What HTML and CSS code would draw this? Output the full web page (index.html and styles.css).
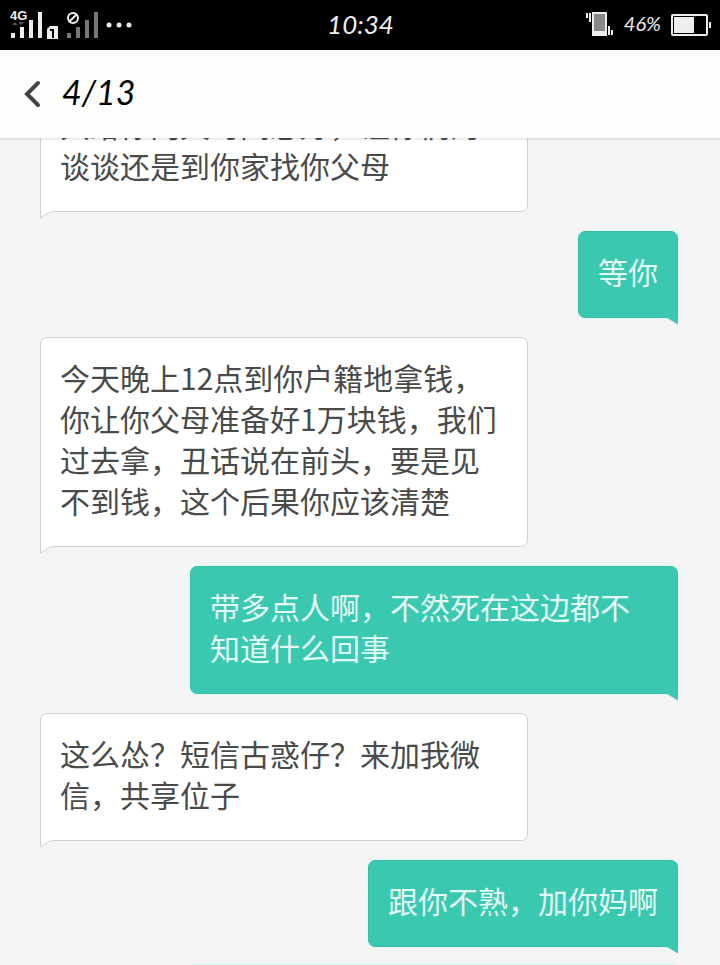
FILE: index.html
```html
<!DOCTYPE html>
<html lang="zh-CN">
<head>
    <meta charset="UTF-8">
    <meta name="viewport" content="width=device-width, initial-scale=1.0">
    <title>4/13</title>
    <link rel="stylesheet" href="styles.css">
</head>
<body>

<div class="statusbar">
    <div class="status-left">
        <svg class="signals" width="126" height="32" viewBox="0 0 126 32" aria-hidden="true">
            <text class="net-type" x="0" y="11">4G</text>
            <path d="M2 16l3-3 3 3zM8 13h6l-3 3z" fill="#555"/>
            <path d="M1 24h4v5H1zM10 18h4v11h-4zM19 11h4v18h-4zM28 3h4v26h-4z" fill="#eee"/>
            <path d="M40 17h8v13H37V20z" fill="#eee"/>
            <path d="M40 21h3v8" fill="none" stroke="#000" stroke-width="2"/>
            <circle cx="63" cy="9" r="5" fill="none" stroke="#eee" stroke-width="2"/>
            <path d="M59 13l8-8" stroke="#eee" stroke-width="2"/>
            <path d="M57 24h4v5h-4zM66 18h4v11h-4zM75 11h4v18h-4zM84 3h4v26h-4z" fill="#777"/>
            <g fill="#eee">
                <circle cx="99" cy="16" r="2.5"/>
                <circle cx="109" cy="16" r="2.5"/>
                <circle cx="119" cy="16" r="2.5"/>
            </g>
        </svg>
    </div>
    <time class="clock">10:34</time>
    <div class="status-right">
        <svg width="28" height="26" viewBox="0 0 28 26" aria-hidden="true">
            <rect x="7" y="1" width="13" height="22" fill="#888" stroke="#eee" stroke-width="2"/>
            <path d="M6 19h15v5H6z" fill="#eee"/>
            <path d="M1 1v5M4 1v9M23 14v9M26 18v5" stroke="#eee" stroke-width="2"/>
        </svg>
        <span class="percent">46%</span>
        <svg width="40" height="22" viewBox="0 0 40 22" aria-hidden="true">
            <rect x="1" y="1" width="35" height="20" rx="1" fill="none" stroke="#eee" stroke-width="2"/>
            <path d="M3 3h20v16H3zM38 8h2v6h-2z" fill="#eee"/>
        </svg>
    </div>
</div>

<header class="topbar">
    <button class="back" type="button" aria-label="返回">
        <svg width="20" height="28" viewBox="0 0 20 28" aria-hidden="true">
            <path d="M16 3L5 14l11 11" fill="none" stroke="#444" stroke-width="4" stroke-linecap="round"/>
        </svg>
    </button>
    <h1>4/13</h1>
</header>

<main class="chat">
    <div class="messages">
        <p class="bubble received">只给你两天时间想好，让你们的<br>谈谈还是到你家找你父母
            <svg class="tail" width="14" height="8" viewBox="0 0 14 8" aria-hidden="true"><path d="M1 0v7l3-2Q9 1 13 1V0z"/><path class="edge" d="M.5 0v7l3-2Q9 .5 14 .5"/></svg>
        </p>
        <p class="bubble sent">等你
            <svg class="tail" width="14" height="8" viewBox="0 0 14 8" aria-hidden="true"><path d="M0 0h14v7q-2 0-4-2L3 1z"/></svg>
        </p>
        <p class="bubble received">今天晚上12点到你户籍地拿钱，你让你父母准备好1万块钱，我们过去拿，丑话说在前头，要是见不到钱，这个后果你应该清楚
            <svg class="tail" width="14" height="8" viewBox="0 0 14 8" aria-hidden="true"><path d="M1 0v7l3-2Q9 1 13 1V0z"/><path class="edge" d="M.5 0v7l3-2Q9 .5 14 .5"/></svg>
        </p>
        <p class="bubble sent">带多点人啊，不然死在这边都不知道什么回事
            <svg class="tail" width="14" height="8" viewBox="0 0 14 8" aria-hidden="true"><path d="M0 0h14v7q-2 0-4-2L3 1z"/></svg>
        </p>
        <p class="bubble received">这么怂？短信古惑仔？来加我微信，共享位子
            <svg class="tail" width="14" height="8" viewBox="0 0 14 8" aria-hidden="true"><path d="M1 0v7l3-2Q9 1 13 1V0z"/><path class="edge" d="M.5 0v7l3-2Q9 .5 14 .5"/></svg>
        </p>
        <p class="bubble sent">跟你不熟，加你妈啊
            <svg class="tail" width="14" height="8" viewBox="0 0 14 8" aria-hidden="true"><path d="M0 0h14v7q-2 0-4-2L3 1z"/></svg>
        </p>
    </div>
    <div class="next"></div>
</main>

</body>
</html>
```
FILE: styles.css
```css
* {
    box-sizing: border-box;
}

body {
    margin: 0;
    height: 100vh;
    display: flex;
    flex-direction: column;
    overflow: hidden;
    background-color: #f4f4f4;
    color: #4a4a4a;
    font-family: "Noto Sans CJK SC", sans-serif;
}

.statusbar {
    display: grid;
    grid-template-columns: 1fr auto 1fr;
    align-items: center;
    flex: none;
    height: 50px;
    padding: 0 9px 0 10px;
    background-color: #000;
    color: #eee;
}

.status-left,
.status-right {
    display: flex;
    align-items: center;
}

.status-right {
    justify-content: flex-end;
    gap: 10px;
}

.signals {
    display: block;
}

.net-type {
    font: bold 13px "Liberation Sans", sans-serif;
    fill: #eee;
}

.clock,
.percent,
.topbar h1 {
    font-family: Lato, sans-serif;
    font-style: italic;
    font-weight: 400;
    line-height: 1;
}

.clock {
    padding-bottom: 2px;
    font-size: 26px;
}

.percent {
    padding-bottom: 4px;
    font-size: 20px;
}

.topbar {
    position: relative;
    z-index: 1;
    display: flex;
    align-items: center;
    gap: 20px;
    flex: none;
    height: 88px;
    padding: 0 22px;
    background-color: #fdfdfd;
    box-shadow: 0 1px 3px rgba(0, 0, 0, 0.15);
}

.topbar h1 {
    margin: 0;
    padding-bottom: 4px;
    font-size: 34px;
    color: #000;
}

.back {
    display: flex;
    padding: 0;
    border: none;
    background: none;
    cursor: pointer;
}

/* scrolled down, so the first message is cut off by the top bar */
.chat {
    flex: 1;
    min-height: 0;
    display: flex;
    flex-direction: column;
    justify-content: flex-end;
    overflow: hidden;
}

.messages {
    display: flex;
    flex-direction: column;
    gap: 19px;
    padding: 0 42px 18px 40px;
}

.bubble {
    position: relative;
    max-width: 488px;
    margin: 0;
    padding: 19px 19px 25px;
    border: 1px solid #d0d0d0;
    border-radius: 7px;
    font-size: 30px;
    font-weight: 400;
    line-height: 41px;
}

.received {
    align-self: flex-start;
    width: 488px;
    background-color: #fff;
    border-bottom-left-radius: 0;
}

.sent {
    align-self: flex-end;
    background-color: #3ac9b0;
    border-color: #36bfa6;
    border-bottom-right-radius: 0;
    color: #e2faf4;
    box-shadow: 0 0 4px #dffaf2;
}

.tail {
    position: absolute;
    top: 100%;
}

.received .tail {
    left: -1px;
    fill: #fff;
}

.received .edge {
    fill: none;
    stroke: #d0d0d0;
}

.sent .tail {
    right: -1px;
    fill: #3ac9b0;
}

/* upper edge of the following message */
.next {
    align-self: flex-end;
    flex: none;
    width: 484px;
    height: 2px;
    margin-right: 44px;
    margin-bottom: -2px;
    box-shadow: 0 -1px 1px #c8f8f2;
}
```
